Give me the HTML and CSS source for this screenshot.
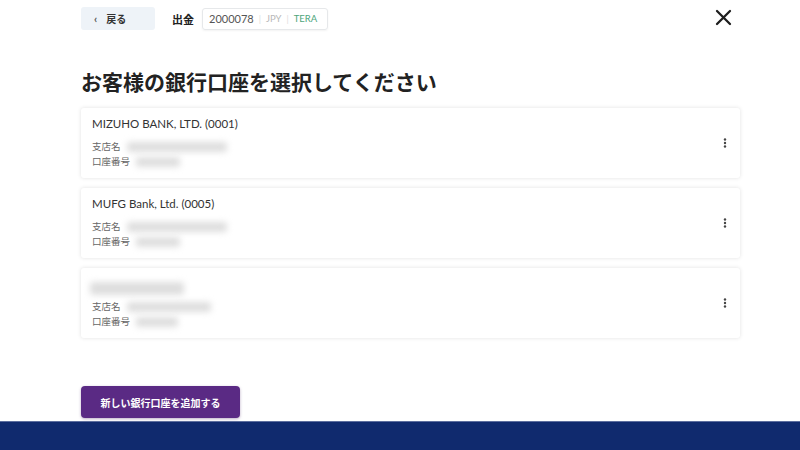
FILE: index.html
```html
<!doctype html>
<html lang="ja">

<head>
    <meta charset="utf-8">
    <meta name="viewport" content="width=device-width, initial-scale=1.0">
    <link rel="stylesheet" href="styles.css">
</head>

<body>
    <div class="page">
        <div class="topbar">
            <div class="topbar-left">
                <div class="back-btn"><span class="chev">‹</span>戻る</div>
                <div class="title-small">出金</div>
                <div class="account-tag">
                    <span class="acc-no">2000078</span>
                    <span class="sep">|</span>
                    <span class="cur">JPY</span>
                    <span class="sep">|</span>
                    <span class="plan">TERA</span>
                </div>
            </div>
            <div class="close-btn">
                <svg width="17" height="17" viewBox="0 0 17 17">
                    <path d="M2 2 L15 15 M15 2 L2 15" stroke="#1e1e1e" stroke-width="2.3" stroke-linecap="round" />
                </svg>
            </div>
        </div>

        <h1 class="heading">お客様の銀行口座を選択してください</h1>

        <div class="bank-list">
            <div class="bank-card">
                <div class="bank-info">
                    <div class="bank-name">MIZUHO BANK, LTD. (0001)</div>
                    <div class="bank-row"><span class="label">支店名</span><span class="masked w104"></span></div>
                    <div class="bank-row"><span class="label">口座番号</span><span class="masked w46"></span></div>
                </div>
                <div class="kebab">
                    <svg width="4" height="10" viewBox="0 0 4 10">
                        <circle cx="2" cy="1.5" r="1.2" fill="#444" />
                        <circle cx="2" cy="5" r="1.2" fill="#444" />
                        <circle cx="2" cy="8.5" r="1.2" fill="#444" />
                    </svg>
                </div>
            </div>

            <div class="bank-card">
                <div class="bank-info">
                    <div class="bank-name">MUFG Bank, Ltd. (0005)</div>
                    <div class="bank-row"><span class="label">支店名</span><span class="masked w104"></span></div>
                    <div class="bank-row"><span class="label">口座番号</span><span class="masked w46"></span></div>
                </div>
                <div class="kebab">
                    <svg width="4" height="10" viewBox="0 0 4 10">
                        <circle cx="2" cy="1.5" r="1.2" fill="#444" />
                        <circle cx="2" cy="5" r="1.2" fill="#444" />
                        <circle cx="2" cy="8.5" r="1.2" fill="#444" />
                    </svg>
                </div>
            </div>

            <div class="bank-card">
                <div class="bank-info">
                    <div class="bank-name"><span class="masked name-mask"></span></div>
                    <div class="bank-row"><span class="label">支店名</span><span class="masked w84"></span></div>
                    <div class="bank-row"><span class="label">口座番号</span><span class="masked w42"></span></div>
                </div>
                <div class="kebab">
                    <svg width="4" height="10" viewBox="0 0 4 10">
                        <circle cx="2" cy="1.5" r="1.2" fill="#444" />
                        <circle cx="2" cy="5" r="1.2" fill="#444" />
                        <circle cx="2" cy="8.5" r="1.2" fill="#444" />
                    </svg>
                </div>
            </div>
        </div>

        <div class="add-btn">新しい銀行口座を追加する</div>
    </div>

    <div class="footer"></div>
</body>

</html>
```

FILE: styles.css
```css
* {
    padding: 0;
    margin: 0;
    box-sizing: border-box;
}

html,
body {
    width: 100%;
    height: 100%;
    background: #fff;
}

body {
    font-family: Lato, "Noto Sans CJK JP", sans-serif;
    color: #333;
    display: flex;
    flex-direction: column;
}

.page {
    flex: 1;
    width: 659px;
    margin-left: 81px;
    padding-top: 7px;
}

/* top bar */
.topbar {
    display: flex;
    justify-content: space-between;
    align-items: center;
    height: 23px;
}

.topbar-left {
    display: flex;
    align-items: center;
}

.back-btn {
    width: 74px;
    height: 23px;
    background: #eef3f8;
    border-radius: 3px;
    display: flex;
    align-items: center;
    padding-left: 13px;
    font-size: 10px;
    font-weight: bold;
    color: #333;
}

.chev {
    font-size: 11px;
    margin-right: 9px;
    color: #555;
}

.title-small {
    margin-left: 17px;
    font-size: 11px;
    font-weight: bold;
    color: #222;
}

.account-tag {
    margin-left: 8px;
    height: 22px;
    width: 126px;
    border: 1px solid #e6e8ea;
    border-radius: 3px;
    box-shadow: 0 1px 2px rgba(0, 0, 0, 0.05);
    display: flex;
    align-items: center;
    padding-left: 6px;
    font-size: 11px;
}

.acc-no {
    color: #555;
}

.sep {
    color: #ddd;
    margin: 0 5px;
    font-size: 9px;
}

.cur {
    color: #b8b8b8;
    font-size: 9.5px;
}

.plan {
    color: #4ea57b;
    font-size: 9.5px;
}

.close-btn {
    margin-right: 8px;
    margin-top: -3px;
    height: 17px;
}

/* heading */
.heading {
    margin-top: 38px;
    font-size: 21px;
    line-height: 28px;
    font-weight: bold;
    color: #222;
}

/* bank cards */
.bank-list {
    margin-top: 12px;
    display: flex;
    flex-direction: column;
    gap: 10px;
}

.bank-card {
    height: 70px;
    background: #fff;
    border-radius: 3px;
    box-shadow: 0 0 4px rgba(0, 0, 0, 0.12);
    display: flex;
    justify-content: space-between;
    align-items: center;
    padding: 0 13px 0 11px;
}

.bank-info {
    display: flex;
    flex-direction: column;
    align-self: flex-start;
    padding-top: 9px;
}

.bank-name {
    font-size: 11.5px;
    line-height: 14px;
    height: 14px;
    color: #333;
    margin-bottom: 8px;
    display: flex;
    align-items: center;
}

.bank-row {
    display: flex;
    align-items: center;
    font-size: 9.5px;
    line-height: 15px;
    color: #666;
}

.masked {
    display: inline-block;
    height: 10px;
    background: #dedede;
    border-radius: 3px;
    filter: blur(3px);
    margin-left: 6px;
}

.w104 {
    width: 100px;
}

.w84 {
    width: 84px;
}

.w46 {
    width: 44px;
}

.w42 {
    width: 42px;
}

.name-mask {
    width: 94px;
    height: 13px;
    margin-left: -2px;
    margin-top: 8px;
}

.kebab {
    display: flex;
    align-items: center;
}

/* add button */
.add-btn {
    margin-top: 48px;
    width: 159px;
    height: 32px;
    background: #5a2a84;
    border-radius: 4px;
    box-shadow: 0 1px 3px rgba(60, 20, 90, 0.35);
    color: #fff;
    font-size: 10px;
    font-weight: bold;
    display: flex;
    align-items: center;
    justify-content: center;
}

.footer {
    height: 29px;
    background: #102a6e;
    border-top: 1px solid #5d6e9e;
}
```
